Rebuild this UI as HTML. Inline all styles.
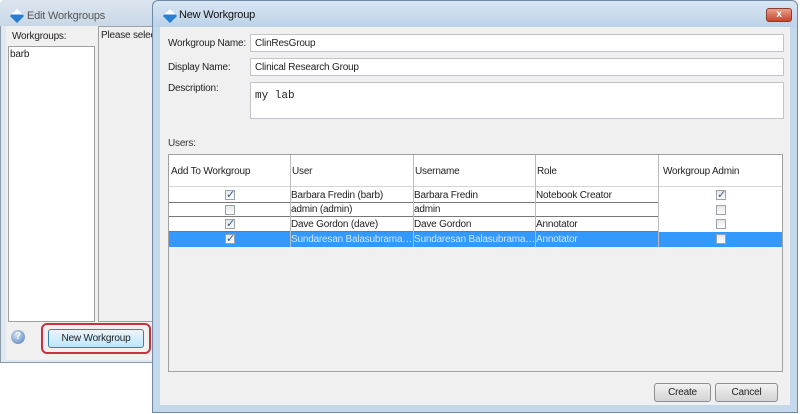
<!DOCTYPE html>
<html><head><style>
*{box-sizing:border-box;margin:0;padding:0}
body{width:800px;height:414px;background:#fff;position:relative;overflow:hidden;font-family:"Liberation Sans",sans-serif;font-size:10px;letter-spacing:-0.2px;color:#222}
.a{position:absolute;white-space:nowrap}
.inp{position:absolute;background:#fff;border:1px solid #bfc4ca;padding:3px 4px;font-size:10px}
.cb{position:absolute;width:10px;height:10px;border:1px solid #9aa3ab;background:linear-gradient(#e6e6e6,#fff)}
.ck::after{content:"✓";position:absolute;left:0px;top:-3px;font-size:11px;color:#3a5a8a}
.btn{position:absolute;border:1px solid #8e8f8f;border-radius:3px;background:linear-gradient(#f2f2f2,#e2e2e2 50%,#d4d4d4);text-align:center;font-size:10px;line-height:17px}
.icon{position:absolute;width:10px;height:10px;transform:rotate(45deg);background:linear-gradient(135deg,#fff 40%,#2a7fd4 41%)}
</style></head><body>
<div class="a" style="left:0;top:0;width:158px;height:363px;background:#dfe8f1;border:1px solid #8d9aa8;border-radius:5px 5px 0 0"></div>
<div class="a" style="left:0;top:0;width:158px;height:26px;background:linear-gradient(#dce6f0,#c9d7e6);border-radius:5px 5px 0 0"></div>
<div class="icon" style="left:12px;top:11px"></div>
<div class="a" style="left:27px;top:10px;font-size:11px;color:#555">Edit Workgroups</div>
<div class="a" style="left:6px;top:26px;width:150px;height:296px;background:#f0f0f0"></div>
<div class="a" style="left:12px;top:31px">Workgroups:</div>
<div class="a" style="left:8px;top:46px;width:87px;height:276px;background:#fff;border:1px solid #a0a0a0"></div>
<div class="a" style="left:10px;top:49px">barb</div>
<div class="a" style="left:98px;top:26px;width:58px;height:296px;border:1px solid #a0a0a0;background:#f0f0f0"></div>
<div class="a" style="left:101px;top:30px">Please selec</div>
<div class="a" style="left:6px;top:322px;width:150px;height:38px;background:#f0f0f0"></div>
<div class="a" style="left:11px;top:330px;width:14px;height:14px;border-radius:50%;background:radial-gradient(circle at 40% 35%,#cfe0f5,#4d7bb5);color:#fff;font-size:10px;font-weight:bold;text-align:center;line-height:14px">?</div>
<div class="a" style="left:41px;top:323px;width:110px;height:31px;border:2px solid #c8323c;border-radius:6px"></div>
<div class="btn" style="left:48px;top:329px;width:96px;height:19px;border-color:#3c7fb1;background:linear-gradient(#eaf6fd,#bee6fd)">New Workgroup</div>
<div class="a" style="left:152px;top:0;width:646px;height:413px;background:#c4d8ec;border:1px solid #6f8aa6;border-radius:6px 6px 0 0"></div>
<div class="a" style="left:153px;top:1px;width:644px;height:26px;background:linear-gradient(#d9e6f3,#bcd2e8);border-radius:6px 6px 0 0"></div>
<div class="icon" style="left:165px;top:11px"></div>
<div class="a" style="left:179px;top:9px;font-size:11px;color:#111">New Workgroup</div>
<div class="a" style="left:766px;top:8px;width:26px;height:14px;border:1px solid #8a3b2e;border-radius:3px;background:linear-gradient(#e8a08c,#c8452a);color:#fff;font-weight:bold;text-align:center;line-height:12px;font-size:10px">x</div>
<div class="a" style="left:160px;top:27px;width:630px;height:378px;background:#f0f0f0"></div>
<div class="a" style="left:168px;top:38px">Workgroup Name:</div>
<div class="inp" style="left:250px;top:34px;width:534px;height:18px">ClinResGroup</div>
<div class="a" style="left:168px;top:62px">Display Name:</div>
<div class="inp" style="left:250px;top:58px;width:534px;height:18px">Clinical Research Group</div>
<div class="a" style="left:168px;top:83px">Description:</div>
<div class="inp" style="left:250px;top:82px;width:534px;height:37px;font-family:'Liberation Mono',monospace;font-size:11px;padding-top:7px;letter-spacing:0">my lab</div>
<div class="a" style="left:168px;top:138px;color:#333">Users:</div>
<div class="a" style="left:168px;top:154px;width:615px;height:218px;border:1px solid #a0a0a0;background:#f0f0f0"></div>
<div class="a" style="left:169px;top:155px;width:613px;height:32px;background:#fff;border-bottom:1px solid #d5d5d5"></div>
<div class="a" style="left:171px;top:166px">Add To Workgroup</div>
<div class="a" style="left:292px;top:166px">User</div>
<div class="a" style="left:415px;top:166px">Username</div>
<div class="a" style="left:537px;top:166px">Role</div>
<div class="a" style="left:663px;top:166px">Workgroup Admin</div>
<div class="a" style="left:169px;top:187px;width:613px;height:60px;background:#fff"></div>
<div class="a" style="left:169px;top:232px;width:613px;height:15px;background:#3399ff"></div>
<div class="a" style="left:169px;top:202px;width:489px;border-top:1px solid #777"></div>
<div class="a" style="left:169px;top:216px;width:489px;border-top:1px solid #777"></div>
<div class="a" style="left:169px;top:231px;width:489px;border-top:1px solid #777"></div>
<div class="a" style="left:290px;top:155px;height:92px;border-left:1px solid #bbb"></div>
<div class="a" style="left:413px;top:155px;height:92px;border-left:1px solid #bbb"></div>
<div class="a" style="left:535px;top:155px;height:92px;border-left:1px solid #bbb"></div>
<div class="a" style="left:658px;top:155px;height:92px;border-left:1px solid #bbb"></div>
<div class="a" style="left:291px;top:190px">Barbara Fredin (barb)</div><div class="a" style="left:414px;top:190px">Barbara Fredin</div><div class="a" style="left:536px;top:190px">Notebook Creator</div>
<div class="a" style="left:291px;top:204px">admin (admin)</div><div class="a" style="left:414px;top:204px">admin</div>
<div class="a" style="left:291px;top:219px">Dave Gordon (dave)</div><div class="a" style="left:414px;top:219px">Dave Gordon</div><div class="a" style="left:536px;top:219px">Annotator</div>
<div class="a" style="left:291px;top:234px;color:#cfe6ff">Sundaresan Balasubrama…</div><div class="a" style="left:414px;top:234px;color:#cfe6ff">Sundaresan Balasubrama…</div><div class="a" style="left:536px;top:234px;color:#cfe6ff">Annotator</div>
<div class="cb ck" style="left:225px;top:190px"></div><div class="cb" style="left:225px;top:205px"></div><div class="cb ck" style="left:225px;top:219px"></div><div class="cb ck" style="left:225px;top:234px"></div>
<div class="cb ck" style="left:716px;top:190px"></div><div class="cb" style="left:716px;top:205px"></div><div class="cb" style="left:716px;top:219px"></div><div class="cb" style="left:716px;top:234px"></div>
<div class="btn" style="left:654px;top:383px;width:57px;height:19px">Create</div>
<div class="btn" style="left:715px;top:383px;width:63px;height:19px">Cancel</div>
</body></html>
